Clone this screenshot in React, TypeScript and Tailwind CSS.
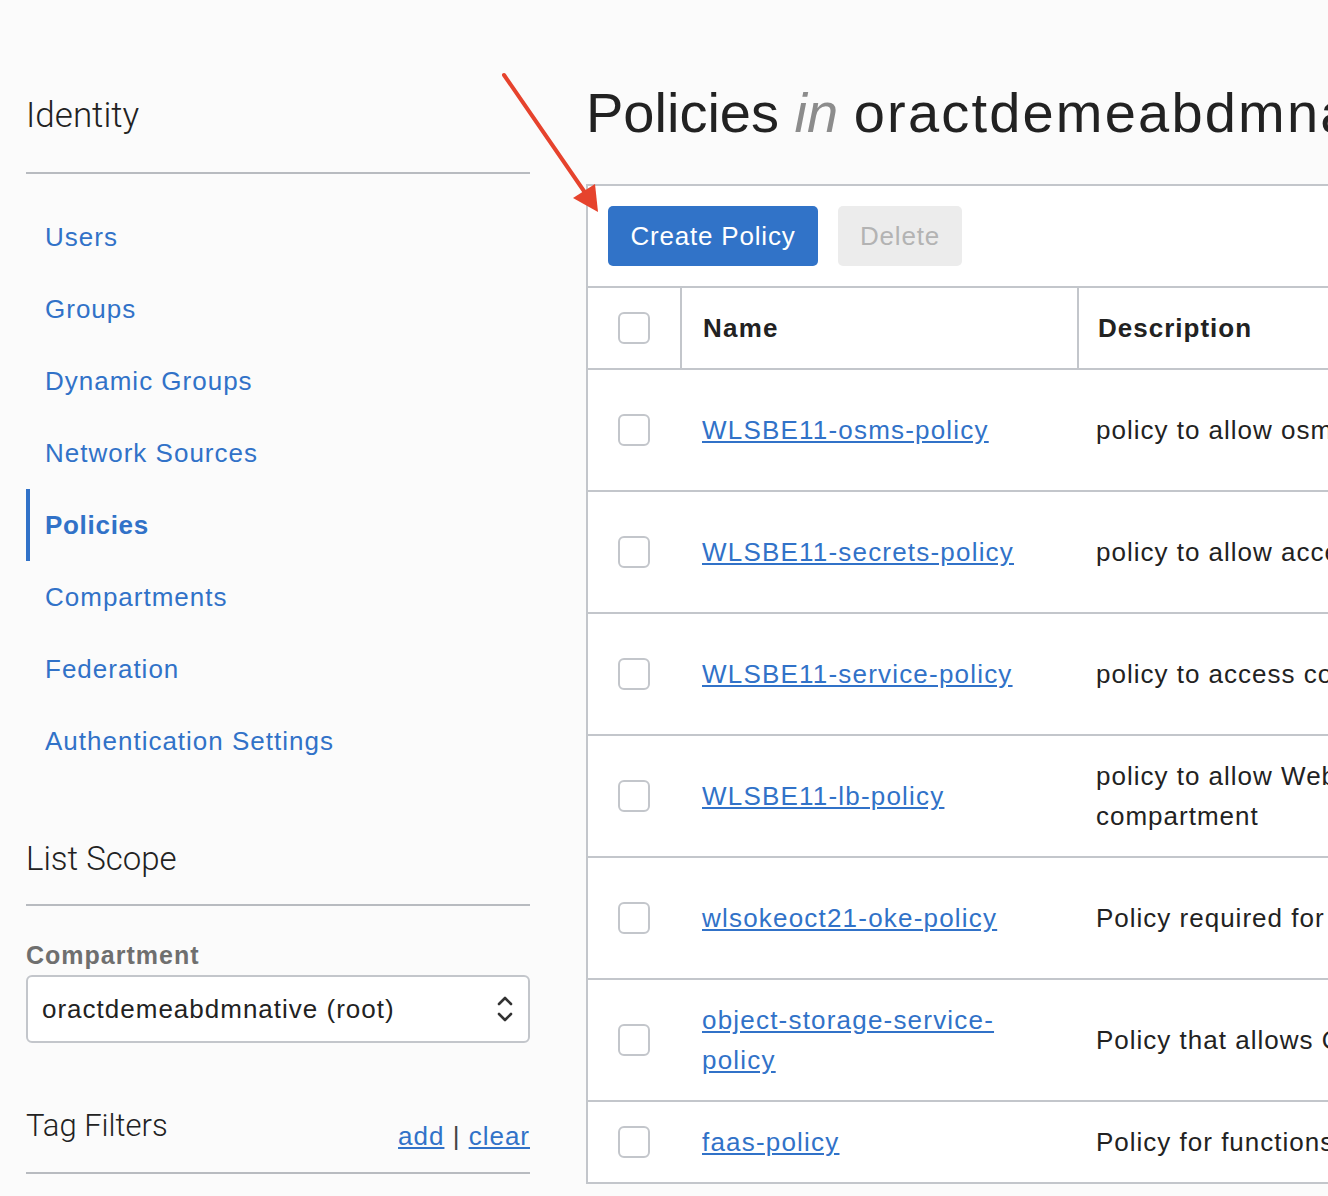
import React from "react";

const navItems = [
  "Users",
  "Groups",
  "Dynamic Groups",
  "Network Sources",
  "Policies",
  "Compartments",
  "Federation",
  "Authentication Settings",
];

type Row = { name: React.ReactNode; desc: React.ReactNode; h: string };

const rows: Row[] = [
  { name: "WLSBE11-osms-policy", desc: "policy to allow osms access to instances", h: "h-[122px]" },
  { name: "WLSBE11-secrets-policy", desc: "policy to allow access to secrets", h: "h-[122px]" },
  { name: "WLSBE11-service-policy", desc: "policy to access compartment resources", h: "h-[122px]" },
  {
    name: "WLSBE11-lb-policy",
    desc: (
      <>
        policy to allow WebLogic load balancer in
        <br />
        compartment
      </>
    ),
    h: "h-[122px]",
  },
  { name: "wlsokeoct21-oke-policy", desc: "Policy required for OKE", h: "h-[122px]" },
  {
    name: (
      <>
        object-storage-service-
        <br />
        policy
      </>
    ),
    desc: "Policy that allows Object Storage service",
    h: "h-[122px]",
  },
  { name: "faas-policy", desc: "Policy for functions", h: "h-[82px]" },
];

function Checkbox() {
  return <div className="w-[32px] h-[32px] rounded-[6px] border-2 border-[#c3c6cb] bg-white" />;
}

export default function App() {
  return (
    <div className="relative w-[1328px] h-[1196px] overflow-hidden bg-[#fbfbfb] font-['Liberation_Sans',Arial,sans-serif] text-[#222]">
      <div className="flex">
        {/* Sidebar */}
        <aside className="ml-[26px] w-[504px] shrink-0">
          <div className="pt-[93px] pb-[33px] border-b-2 border-[#b8bbc0]">
            <div className="text-[35px] leading-[46px] font-['Roboto',sans-serif] font-light text-[#222]">Identity</div>
          </div>
          <nav className="mt-[27px]">
            {navItems.map((item) => {
              const active = item === "Policies";
              return (
                <div
                  key={item}
                  className={
                    active
                      ? "h-[72px] flex items-center border-l-4 border-[#3172c8] pl-[15px] text-[26px] tracking-[0.7px] font-bold text-[#3172c8]"
                      : "h-[72px] flex items-center pl-[19px] text-[26px] tracking-[1px] text-[#3172c8]"
                  }
                >
                  {item}
                </div>
              );
            })}
          </nav>
          <div className="mt-[62px] pb-[25px] border-b-2 border-[#b8bbc0]">
            <div className="text-[33px] leading-[40px] font-['Roboto',sans-serif] font-light text-[#222]">List Scope</div>
          </div>
          <div className="mt-[34px] text-[25px] leading-[30px] tracking-[1px] font-bold text-[#6f6f6f]">Compartment</div>
          <div className="mt-[5px] h-[68px] rounded-[6px] border-2 border-[#c3c6cb] bg-white flex items-center justify-between pl-[14px] pr-[14px]">
            <span className="text-[26px] tracking-[1px] text-[#222]">oractdemeabdmnative (root)</span>
            <svg width="18" height="30" viewBox="0 0 18 30" fill="none" stroke="#333" strokeWidth="2.6" strokeLinecap="round" strokeLinejoin="round">
              <path d="M3 10 L9 4 L15 10" />
              <path d="M3 20 L9 26 L15 20" />
            </svg>
          </div>
          <div className="mt-[63px] pb-[21px] border-b-2 border-[#b8bbc0] flex justify-between items-start">
            <div className="text-[31px] leading-[40px] font-['Roboto',sans-serif] font-light text-[#222]">Tag Filters</div>
            <div className="mt-[15px] text-[26px] leading-[30px] tracking-[1px] text-[#222]">
              <span className="text-[#3172c8] underline">add</span>
              <span className="text-[#444]"> | </span>
              <span className="text-[#3172c8] underline">clear</span>
            </div>
          </div>
        </aside>

        {/* Main */}
        <main className="ml-[56px] w-[1100px] shrink-0">
          <h1 className="pt-[81px] h-[145px] text-[56px] leading-[64px] whitespace-nowrap text-[#222]">
            Policies <span className="italic text-[#8c8c8c]">in</span>{" "}
            <span className="tracking-[2.2px]">oractdemeabdmnative</span>
          </h1>
          <section className="mt-[39px] border-t-2 border-l-2 border-[#c3c6cb] bg-white">
            <div className="h-[100px] flex items-center gap-[20px] pl-[20px]">
              <button className="h-[60px] w-[210px] rounded-[5px] bg-[#3173c8] text-white text-[26px] tracking-[0.8px]">Create Policy</button>
              <button className="h-[60px] w-[124px] rounded-[5px] bg-[#ececec] text-[#b3b3b3] text-[26px] tracking-[0.8px]">Delete</button>
            </div>
            <div className="h-[84px] flex border-y-2 border-[#c3c6cb]">
              <div className="w-[92px] flex items-center pl-[30px]">
                <Checkbox />
              </div>
              <div className="w-[397px] border-l-2 border-[#c3c6cb] flex items-center pl-[21px] text-[26px] tracking-[1.2px] font-bold">Name</div>
              <div className="flex-1 border-l-2 border-[#c3c6cb] flex items-center pl-[19px] text-[26px] tracking-[1px] font-bold">Description</div>
            </div>
            {rows.map((r, i) => (
              <div key={i} className={`${r.h} flex border-b-2 border-[#c3c6cb]`}>
                <div className="w-[92px] flex items-center pl-[30px]">
                  <Checkbox />
                </div>
                <div className="w-[397px] flex items-center pl-[22px]">
                  <span className="text-[26px] leading-[40px] tracking-[1.2px] text-[#3172c8] underline">{r.name}</span>
                </div>
                <div className="flex-1 flex items-center pl-[19px]">
                  <span className="text-[26px] leading-[40px] tracking-[1px] whitespace-nowrap text-[#222]">{r.desc}</span>
                </div>
              </div>
            ))}
          </section>
        </main>
      </div>

      {/* Red annotation arrow */}
      <svg className="absolute left-0 top-0 pointer-events-none" width="1328" height="1196">
        <line x1="504" y1="75" x2="586" y2="194" stroke="#e6432d" strokeWidth="4" strokeLinecap="round" />
        <polygon points="598,212 573,198 595,184" fill="#e6432d" />
      </svg>
    </div>
  );
}
